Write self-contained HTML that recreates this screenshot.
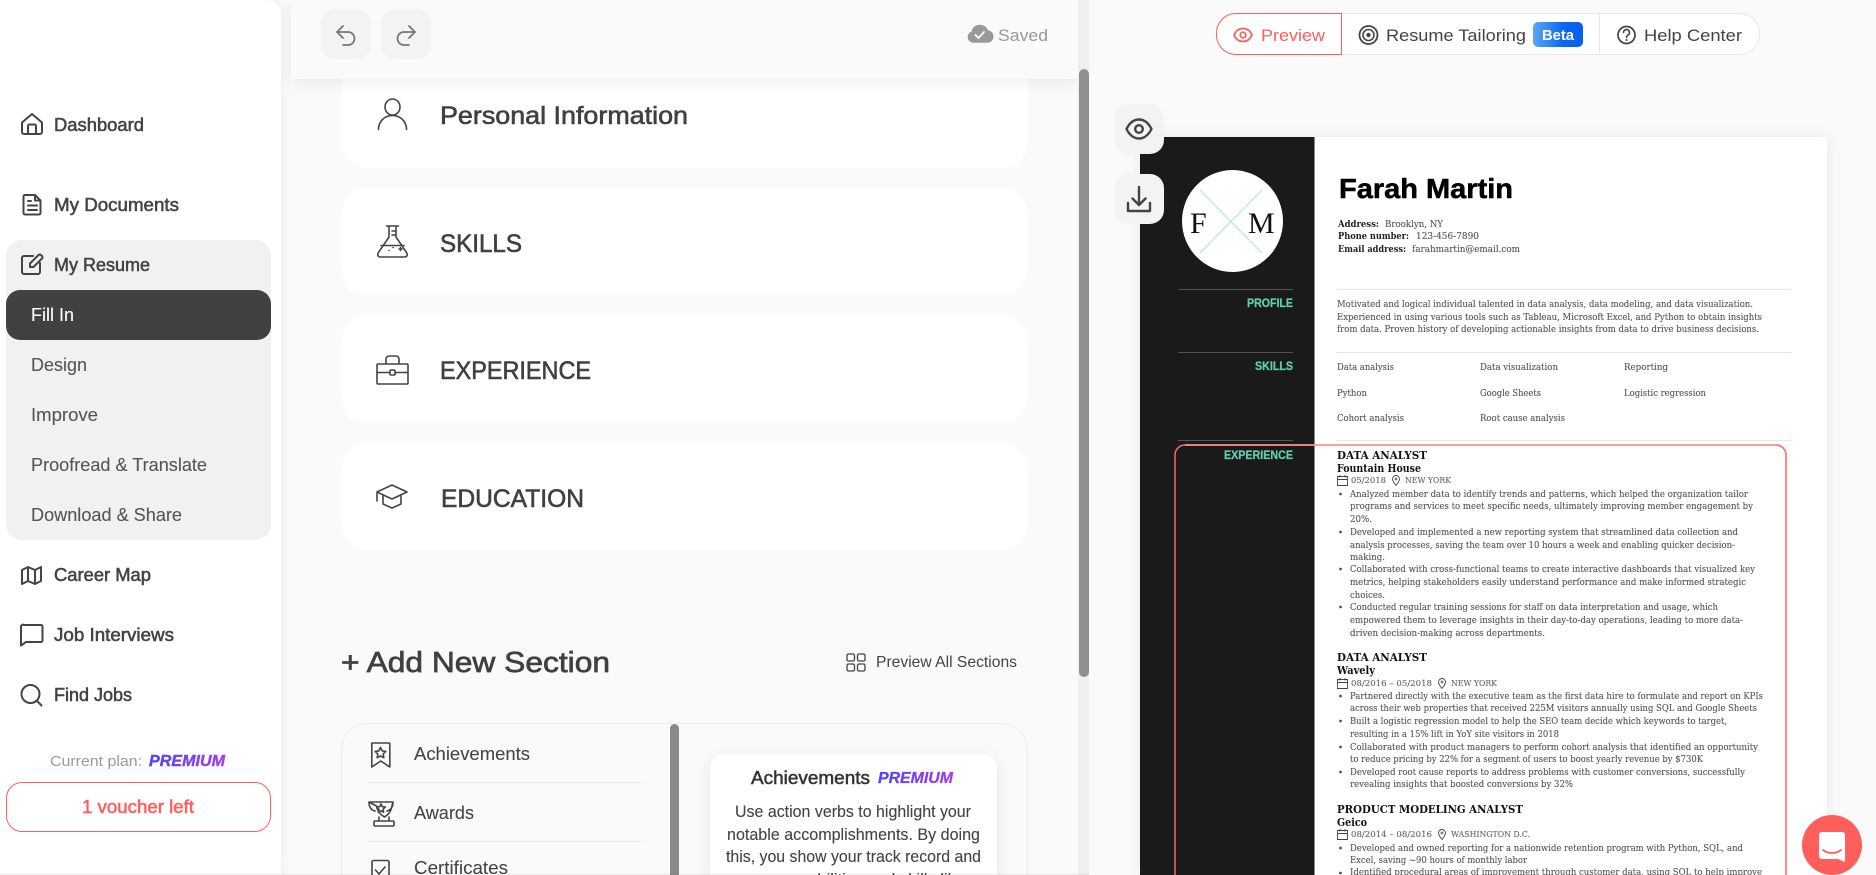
<!DOCTYPE html>
<html lang="en"><head><meta charset="utf-8"><title>Resume Builder</title>
<style>
html,body{margin:0;padding:0;width:1876px;height:875px;overflow:hidden;background:#fafafa;font-family:"Liberation Sans",sans-serif}
#w{position:relative;width:1876px;height:875px;overflow:hidden;background:#fafafa}
.b{position:absolute;box-sizing:border-box}
svg.o{position:absolute;left:0;top:0;overflow:hidden}
text{font-family:"Liberation Sans",sans-serif}
.n{font-size:18px;fill:#444;stroke:#444;stroke-width:.55}
.s{font-size:18px;fill:#555;stroke:#555;stroke-width:.1}
.h{font-size:25px;fill:#404040;stroke:#404040;stroke-width:.6}
.t{font-size:17px;fill:#444;stroke:#444;stroke-width:.12}
.r{font-family:"DejaVu Serif",serif;font-size:8.8px;fill:#555;stroke:#555;stroke-width:.12}
.j{font-family:"DejaVu Serif",serif;font-size:11.5px;font-weight:bold;fill:#111}
.k{font-family:"DejaVu Serif",serif;font-size:9px;font-weight:bold;fill:#222}
.d{font-family:"DejaVu Serif",serif;font-size:8.6px;fill:#666;stroke:#666;stroke-width:.12}
.l{font-size:11.5px;font-weight:bold;fill:#5ed0b2;stroke:#5ed0b2;stroke-width:.25}
.i{fill:none;stroke:#444;stroke-width:2;stroke-linecap:round;stroke-linejoin:round}
.c{fill:none;stroke:#444;stroke-width:1.6;stroke-linecap:round;stroke-linejoin:round}
</style></head><body>
<div id="w">
<!-- middle panel -->
<div class="b" style="left:341px;top:40px;width:687px;height:128px;background:#fff;border-radius:26px"></div>
<div class="b" style="left:341px;top:188px;width:687px;height:107px;background:#fff;border-radius:26px"></div>
<div class="b" style="left:341px;top:315px;width:687px;height:108px;background:#fff;border-radius:26px"></div>
<div class="b" style="left:341px;top:443px;width:687px;height:107px;background:#fff;border-radius:26px"></div>
<div class="b" style="left:291px;top:0;width:787px;height:79px;background:#fafafa;box-shadow:0 4px 14px rgba(0,0,0,.07)"></div>
<div class="b" style="left:321px;top:9px;width:50px;height:50px;background:#f3f3f3;border-radius:14px"></div>
<div class="b" style="left:381px;top:9px;width:50px;height:50px;background:#f3f3f3;border-radius:14px"></div>
<div class="b" style="left:1078px;top:0;width:11px;height:875px;background:#efefef"></div>
<div class="b" style="left:1079px;top:69px;width:10px;height:608px;background:#8f8f8f;border-radius:5px"></div>

<div class="b" style="left:341px;top:723px;width:687px;height:152px;border:1px solid #ececec;border-bottom:0;border-radius:26px 26px 0 0"></div>
<div class="b" style="left:670px;top:724px;width:9px;height:151px;background:#8a8a8a;border-radius:5px 5px 0 0"></div>
<div class="b" style="left:368px;top:782px;width:274px;height:1px;background:#e8e8e8"></div>
<div class="b" style="left:368px;top:841px;width:274px;height:1px;background:#e8e8e8"></div>
<div class="b" style="left:710px;top:754px;width:287px;height:121px;background:#fff;border-radius:14px 14px 0 0;box-shadow:0 4px 16px rgba(0,0,0,.09)"></div>

<!-- sidebar -->
<div class="b" style="left:0;top:0;width:281px;height:875px;background:#fff;border-radius:0 14px 0 0;box-shadow:0 0 12px rgba(0,0,0,.07)"></div>
<div class="b" style="left:6px;top:240px;width:265px;height:300px;background:#f1f1f1;border-radius:16px"></div>
<div class="b" style="left:6px;top:290px;width:265px;height:50px;background:#414141;border-radius:14px"></div>
<div class="b" style="left:6px;top:782px;width:265px;height:50px;background:#fff;border:1px solid #ff5f5b;border-radius:16px"></div>
<div class="b" style="left:0;top:873px;width:1089px;height:2px;background:rgba(0,0,0,.03)"></div>

<!-- tabs -->
<div class="b" style="left:1216px;top:13px;width:544px;height:42px;background:#fff;border:1px solid #e8e8e8;border-radius:20px"></div>
<div class="b" style="left:1599px;top:14px;width:1px;height:40px;background:#e8e8e8"></div>
<div class="b" style="left:1216px;top:13px;width:126px;height:42px;background:#fff;border:1px solid #ff5f5b;border-radius:20px 0 0 20px"></div>

<!-- resume -->
<div class="b" style="left:1140px;top:137px;width:687px;height:738px;background:#fff;box-shadow:0 0 16px rgba(0,0,0,.08)"></div>
<div class="b" style="left:1140px;top:137px;width:175px;height:738px;background:#1a1a1a;border-right:1px solid #888"></div>
<div class="b" style="left:1182px;top:170px;width:101px;height:102px;background:#fff;border-radius:50%"></div>
<div class="b" style="left:1178px;top:289px;width:115px;height:1px;background:#555"></div>
<div class="b" style="left:1178px;top:352px;width:115px;height:1px;background:#555"></div>
<div class="b" style="left:1178px;top:440px;width:115px;height:1px;background:#555"></div>
<div class="b" style="left:1337px;top:289px;width:454px;height:1px;background:#e8e8e8"></div>
<div class="b" style="left:1337px;top:352px;width:454px;height:1px;background:#e8e8e8"></div>
<div class="b" style="left:1337px;top:440px;width:454px;height:1px;background:#e8e8e8"></div>
<div class="b" style="left:1114px;top:104px;width:50px;height:50px;background:#f3f3f3;border-radius:14px"></div>
<div class="b" style="left:1114px;top:174px;width:50px;height:50px;background:#f3f3f3;border-radius:14px"></div>

<svg class="o" width="1876" height="875" viewBox="0 0 1876 875" xmlns="http://www.w3.org/2000/svg">
<defs>
<linearGradient id="p" x1="0" x2="1" y1="0" y2="0"><stop offset="0" stop-color="#4b46ff"/><stop offset="1" stop-color="#a63df0"/></linearGradient>
<linearGradient id="bt" x1="0" x2="1" y1="0" y2="0"><stop offset="0" stop-color="#5aa8f5"/><stop offset=".6" stop-color="#0c68f2"/><stop offset="1" stop-color="#0a5ef0"/></linearGradient>
</defs>

<!-- SIDEBAR TEXT -->
<text class="n" x="54" y="131" textLength="90" lengthAdjust="spacingAndGlyphs">Dashboard</text>
<text class="n" x="54" y="211" textLength="125" lengthAdjust="spacingAndGlyphs">My Documents</text>
<text class="n" x="54" y="271" textLength="96" lengthAdjust="spacingAndGlyphs">My Resume</text>
<text class="s" x="31" y="321" textLength="43" lengthAdjust="spacingAndGlyphs" style="fill:#fff;stroke:#fff">Fill In</text>
<text class="s" x="31" y="371" textLength="56" lengthAdjust="spacingAndGlyphs">Design</text>
<text class="s" x="31" y="421" textLength="67" lengthAdjust="spacingAndGlyphs">Improve</text>
<text class="s" x="31" y="471" textLength="176" lengthAdjust="spacingAndGlyphs">Proofread &amp; Translate</text>
<text class="s" x="31" y="521" textLength="151" lengthAdjust="spacingAndGlyphs">Download &amp; Share</text>
<text class="n" x="54" y="581" textLength="97" lengthAdjust="spacingAndGlyphs">Career Map</text>
<text class="n" x="54" y="641" textLength="120" lengthAdjust="spacingAndGlyphs">Job Interviews</text>
<text class="n" x="54" y="701" textLength="78" lengthAdjust="spacingAndGlyphs">Find Jobs</text>
<text x="50" y="766" font-size="15" fill="#999" textLength="92" lengthAdjust="spacingAndGlyphs">Current plan:</text>
<text x="149" y="766" font-size="15.5" font-weight="bold" font-style="italic" fill="url(#p)" stroke="url(#p)" stroke-width=".4" textLength="76" lengthAdjust="spacingAndGlyphs">PREMIUM</text>
<text x="82" y="813" font-size="18" fill="#ff5f5b" stroke="#ff5f5b" stroke-width=".55" textLength="112" lengthAdjust="spacingAndGlyphs">1 voucher left</text>

<!-- SIDEBAR ICONS -->
<path class="i" d="M22 122.500 32 114l10 8.500V132a2 2 0 0 1-2 2H24a2 2 0 0 1-2-2z"/><path class="i" d="M28 134v-8a1.500 1.500 0 0 1 1.500-1.500h5A1.500 1.500 0 0 1 36 126v8"/>
<path class="i" d="M25 195h10l5.500 5.500V213a1.500 1.500 0 0 1-1.500 1.500H25a1.500 1.500 0 0 1-1.500-1.500V196.500A1.500 1.500 0 0 1 25 195z"/><path class="i" d="M35 195v5.500h5.500M28 201h3M28 205.500h9M28 210h9" stroke-width="1.700"/>
<path class="i" d="M33 256h-9a2 2 0 0 0-2 2v14a2 2 0 0 0 2 2h14a2 2 0 0 0 2-2v-9"/><path class="i" d="M30 267v-3.500L38.500 255a1.800 1.800 0 0 1 2.500 0l1 1a1.800 1.800 0 0 1 0 2.500L33.500 267z"/>
<path class="i" d="M22 570l6-3 7 3 6-3v14l-6 3-7-3-6 3zM28 567v14M35 570v14"/>
<path class="i" d="M24 625h17a1.500 1.500 0 0 1 1.500 1.500v14a1.500 1.500 0 0 1-1.500 1.500H26l-5 3.500V627a2 2 0 0 1 3-2z"/>
<circle class="i" cx="30.500" cy="694" r="9"/><path class="i" d="M37 701l4.500 4.500"/>

<!-- TOOLBAR -->
<path d="M343 26l-6 6 6 6M337 32h11a6.500 6.500 0 0 1 0 13h-5" fill="none" stroke="#777" stroke-width="1.800" stroke-linecap="round" stroke-linejoin="round"/>
<path d="M409 26l6 6-6 6M415 32h-11a6.500 6.500 0 0 0 0 13h5" fill="none" stroke="#777" stroke-width="1.800" stroke-linecap="round" stroke-linejoin="round"/>
<path d="M973 42a5 5 0 0 1-1-9.800 8 8 0 0 1 15.500-1.200 5.500 5.500 0 0 1-.5 11z" fill="#999" stroke="#999" stroke-width="1.500"/>
<path d="M975.500 35l3 3 5.500-6" fill="none" stroke="#fff" stroke-width="1.800" stroke-linecap="round"/>
<text x="998" y="41" font-size="17" fill="#999" textLength="50" lengthAdjust="spacingAndGlyphs">Saved</text>

<!-- SECTIONS -->
<text class="h" x="440" y="124" textLength="248" lengthAdjust="spacingAndGlyphs">Personal Information</text>
<text class="h" x="440" y="252" textLength="82" lengthAdjust="spacingAndGlyphs">SKILLS</text>
<text class="h" x="440" y="379" textLength="151" lengthAdjust="spacingAndGlyphs">EXPERIENCE</text>
<text class="h" x="441" y="507" textLength="143" lengthAdjust="spacingAndGlyphs">EDUCATION</text>

<ellipse class="c" cx="392.500" cy="107" rx="7.500" ry="8"/><path class="c" d="M378.500 129.500c0-8 6-14 14-14s14 6 14 14"/>
<path class="c" d="M386.500 226h12M389 226v11l-10.500 15.500c-1.500 2.500-.5 4.500 2 4.500h24c2.500 0 3.500-2 2-4.500L396 237v-11M392 231h4M392 235h4M381 245.500h23"/><path class="c" d="M389 250.500h.1M393 247.500h.1M399 249h3M400.500 247.500v3"/>
<path class="c" d="M378 364h29a1 1 0 0 1 1 1v18a1 1 0 0 1-1 1h-29a1 1 0 0 1-1-1v-18a1 1 0 0 1 1-1zM386 364v-5a3 3 0 0 1 3-3h7a3 3 0 0 1 3 3v5M377 372.500h13M395 372.500h13"/><rect class="c" x="390" y="370" width="5" height="5" rx="1"/>
<path class="c" d="M392 485l15 7-15 7-15-7zM377 492v9M383 495v9l9 4 9-4v-9"/>

<text x="341" y="672" font-size="29" fill="#404040" stroke="#404040" stroke-width=".7" textLength="269" lengthAdjust="spacingAndGlyphs">+ Add New Section</text>
<g><rect class="c" style="stroke-width:1.3" x="847" y="654" width="7.500" height="7" rx="1.500"/><rect class="c" style="stroke-width:1.3" x="857.500" y="654" width="7.500" height="7" rx="1.500"/><rect class="c" style="stroke-width:1.3" x="847" y="664" width="7.500" height="7" rx="1.500"/><rect class="c" style="stroke-width:1.3" x="857.500" y="664" width="7.500" height="7" rx="1.500"/></g>
<text x="876" y="667" font-size="16" fill="#444" textLength="141" lengthAdjust="spacingAndGlyphs">Preview All Sections</text>

<text class="s" x="414" y="760" textLength="116" lengthAdjust="spacingAndGlyphs" style="fill:#444">Achievements</text>
<text class="s" x="414" y="819" textLength="60" lengthAdjust="spacingAndGlyphs" style="fill:#444">Awards</text>
<text class="s" x="414" y="874" textLength="94" lengthAdjust="spacingAndGlyphs" style="fill:#444">Certificates</text>
<path class="c" d="M372 743h17a.800.800 0 0 1 .800.800V767l-9-6-9 6V743.800a.800.800 0 0 1 .200-.800z"/><path class="c" d="M380.500 747.500l1.700 3.400 3.600.500-2.600 2.600.6 3.700-3.300-1.800-3.300 1.800.6-3.700-2.600-2.600 3.600-.500z"/>
<path class="c" d="M369 802h24l-1 4c-1 6-4 9-7.500 11-3.500-2-7-5-8-11zM369 802c0 5 2 8 6 9M393 802c0 5-2 8-6 9"/><path class="c" d="M379 817v4h10v-4M375 821h18a1 1 0 0 1 1 1v3a1 1 0 0 1-1 1h-18a1 1 0 0 1-1-1v-3a1 1 0 0 1 1-1zM381 804l1.300 2.700 3 .4-2.200 2.100.5 3-2.600-1.400-2.600 1.400.5-3-2.200-2.100 3-.4z"/>
<path class="c" d="M372 875v-13a1.500 1.500 0 0 1 1.500-1.500h14a1.500 1.500 0 0 1 1.500 1.500v13"/><path class="c" d="M375.500 870l3.500 4 6-7"/>

<text x="751" y="784" font-size="18" fill="#333" stroke="#333" stroke-width=".5" textLength="119" lengthAdjust="spacingAndGlyphs">Achievements</text>
<text x="878" y="783" font-size="16" font-weight="bold" font-style="italic" fill="url(#p)" stroke="url(#p)" stroke-width=".3" textLength="75" lengthAdjust="spacingAndGlyphs">PREMIUM</text>
<text class="t" x="735" y="817" textLength="236" lengthAdjust="spacingAndGlyphs">Use action verbs to highlight your</text>
<text class="t" x="727" y="840" textLength="253" lengthAdjust="spacingAndGlyphs">notable accomplishments. By doing</text>
<text class="t" x="726" y="862" textLength="255" lengthAdjust="spacingAndGlyphs">this, you show your track record and</text>
<text class="t" x="745" y="885" textLength="220" lengthAdjust="spacingAndGlyphs">your capabilities and skills like</text>

<!-- TABS -->
<text x="1261" y="41" font-size="17" fill="#ff5f5b" textLength="64" lengthAdjust="spacingAndGlyphs">Preview</text>
<text x="1386" y="41" font-size="17" fill="#444" textLength="140" lengthAdjust="spacingAndGlyphs">Resume Tailoring</text>
<text x="1644" y="41" font-size="17" fill="#444" textLength="98" lengthAdjust="spacingAndGlyphs">Help Center</text>
<rect x="1533" y="22" width="50" height="25" rx="5" fill="url(#bt)"/>
<text x="1542" y="40" font-size="15" font-weight="bold" fill="#fff" textLength="32" lengthAdjust="spacingAndGlyphs">Beta</text>
<path d="M1234 35c2-4.500 5-6.500 9-6.500s7 2 9 6.500c-2 4.500-5 6.500-9 6.500s-7-2-9-6.500z" fill="none" stroke="#ff5f5b" stroke-width="1.700"/><circle cx="1243" cy="35" r="2.800" fill="none" stroke="#ff5f5b" stroke-width="1.700"/>
<circle cx="1368.500" cy="35" r="9" fill="none" stroke="#444" stroke-width="1.800"/><circle cx="1368.500" cy="35" r="5.500" fill="none" stroke="#444" stroke-width="1.600"/><circle cx="1368.500" cy="35" r="2.200" fill="#444"/>
<circle cx="1626.500" cy="35" r="8.500" fill="none" stroke="#444" stroke-width="1.700"/><path d="M1623.500 32.500a3 3 0 1 1 4.500 2.600c-1 .6-1.500 1.200-1.500 2.200" fill="none" stroke="#444" stroke-width="1.600" stroke-linecap="round"/><circle cx="1626.500" cy="40" r="1" fill="#444"/>

<!-- FLOAT BUTTONS -->
<path d="M1126.500 129c3-6 7-9.500 12.500-9.500s9.500 3.500 12.500 9.500c-3 6-7 9.500-12.500 9.500s-9.500-3.500-12.500-9.500z" fill="none" stroke="#444" stroke-width="2.400" stroke-linejoin="round"/><circle cx="1139" cy="129" r="3.800" fill="none" stroke="#444" stroke-width="2.400"/>
<path d="M1139 187v18M1132.500 198.500l6.500 6.500 6.500-6.500M1128 203v8h22v-8" fill="none" stroke="#444" stroke-width="2.400" stroke-linecap="round" stroke-linejoin="round"/>

<!-- RESUME HEADER -->
<path d="M1200 190l62 63M1262 190l-62 63" stroke="#a4e8d6" stroke-width="1"/>
<text x="1190" y="233" font-size="30" fill="#111" style="font-family:'Liberation Serif',serif">F</text>
<text x="1248" y="233" font-size="30" fill="#111" style="font-family:'Liberation Serif',serif">M</text>
<text x="1339" y="198" font-size="28" font-weight="bold" fill="#000" stroke="#000" stroke-width=".5" textLength="174" lengthAdjust="spacingAndGlyphs">Farah Martin</text>
<text class="k" x="1338" y="227" textLength="41" lengthAdjust="spacingAndGlyphs">Address:</text><text class="r" x="1385" y="227" textLength="58" lengthAdjust="spacingAndGlyphs">Brooklyn, NY</text>
<text class="k" x="1338" y="239" textLength="71" lengthAdjust="spacingAndGlyphs">Phone number:</text><text class="r" x="1416" y="239" textLength="63" lengthAdjust="spacingAndGlyphs">123-456-7890</text>
<text class="k" x="1338" y="252" textLength="68" lengthAdjust="spacingAndGlyphs">Email address:</text><text class="r" x="1412" y="252" textLength="108" lengthAdjust="spacingAndGlyphs">farahmartin@email.com</text>

<text class="l" x="1247" y="307" textLength="46" lengthAdjust="spacingAndGlyphs">PROFILE</text>
<text class="l" x="1255" y="370" textLength="38" lengthAdjust="spacingAndGlyphs">SKILLS</text>
<text class="l" x="1224" y="459" textLength="69" lengthAdjust="spacingAndGlyphs">EXPERIENCE</text>

<text class="r" x="1337" y="307" textLength="416" lengthAdjust="spacingAndGlyphs">Motivated and logical individual talented in data analysis, data modeling, and data visualization.</text>
<text class="r" x="1337" y="320" textLength="425" lengthAdjust="spacingAndGlyphs">Experienced in using various tools such as Tableau, Microsoft Excel, and Python to obtain insights</text>
<text class="r" x="1337" y="332" textLength="422" lengthAdjust="spacingAndGlyphs">from data. Proven history of developing actionable insights from data to drive business decisions.</text>

<text class="r" x="1337" y="370" textLength="57" lengthAdjust="spacingAndGlyphs">Data analysis</text>
<text class="r" x="1480" y="370" textLength="78" lengthAdjust="spacingAndGlyphs">Data visualization</text>
<text class="r" x="1624" y="370" textLength="44" lengthAdjust="spacingAndGlyphs">Reporting</text>
<text class="r" x="1337" y="396" textLength="30" lengthAdjust="spacingAndGlyphs">Python</text>
<text class="r" x="1480" y="396" textLength="61" lengthAdjust="spacingAndGlyphs">Google Sheets</text>
<text class="r" x="1624" y="396" textLength="82" lengthAdjust="spacingAndGlyphs">Logistic regression</text>
<text class="r" x="1337" y="421" textLength="67" lengthAdjust="spacingAndGlyphs">Cohort analysis</text>
<text class="r" x="1480" y="421" textLength="85" lengthAdjust="spacingAndGlyphs">Root cause analysis</text>

<!-- JOB 1 -->
<text class="j" x="1337" y="459" textLength="90" lengthAdjust="spacingAndGlyphs">DATA ANALYST</text>
<text class="j" x="1337" y="472" textLength="84" lengthAdjust="spacingAndGlyphs">Fountain House</text>
<path d="M1337.500 476.500h10v9h-10zM1337.500 479.500h10M1340 475v2.500M1345 475v2.500" fill="none" stroke="#444" stroke-width=".9"/>
<text class="d" x="1351" y="483" textLength="35" lengthAdjust="spacingAndGlyphs">05/2018</text>
<path d="M1396 485.500c-2-2.500-3.500-4.500-3.500-6.500a3.500 3.500 0 0 1 7 0c0 2-1.500 4-3.500 6.500z" fill="none" stroke="#444" stroke-width=".9"/><circle cx="1396" cy="479" r="1" fill="none" stroke="#444" stroke-width=".7"/>
<text class="d" x="1405" y="483" textLength="46" lengthAdjust="spacingAndGlyphs">NEW YORK</text>
<g fill="#555"><circle cx="1340.500" cy="494" r="1.400"/><circle cx="1340.500" cy="532" r="1.400"/><circle cx="1340.500" cy="569" r="1.400"/><circle cx="1340.500" cy="607" r="1.400"/><circle cx="1340.500" cy="696" r="1.400"/><circle cx="1340.500" cy="721" r="1.400"/><circle cx="1340.500" cy="747" r="1.400"/><circle cx="1340.500" cy="772" r="1.400"/><circle cx="1340.500" cy="848" r="1.400"/><circle cx="1340.500" cy="873" r="1.400"/></g>
<text class="r" x="1350" y="497" textLength="398" lengthAdjust="spacingAndGlyphs">Analyzed member data to identify trends and patterns, which helped the organization tailor</text>
<text class="r" x="1350" y="509" textLength="403" lengthAdjust="spacingAndGlyphs">programs and services to meet specific needs, ultimately improving member engagement by</text>
<text class="r" x="1350" y="522" textLength="22" lengthAdjust="spacingAndGlyphs">20%.</text>
<text class="r" x="1350" y="535" textLength="388" lengthAdjust="spacingAndGlyphs">Developed and implemented a new reporting system that streamlined data collection and</text>
<text class="r" x="1350" y="548" textLength="385" lengthAdjust="spacingAndGlyphs">analysis processes, saving the team over 10 hours a week and enabling quicker decision-</text>
<text class="r" x="1350" y="560" textLength="35" lengthAdjust="spacingAndGlyphs">making.</text>
<text class="r" x="1350" y="572" textLength="405" lengthAdjust="spacingAndGlyphs">Collaborated with cross-functional teams to create interactive dashboards that visualized key</text>
<text class="r" x="1350" y="585" textLength="396" lengthAdjust="spacingAndGlyphs">metrics, helping stakeholders easily understand performance and make informed strategic</text>
<text class="r" x="1350" y="598" textLength="35" lengthAdjust="spacingAndGlyphs">choices.</text>
<text class="r" x="1350" y="610" textLength="368" lengthAdjust="spacingAndGlyphs">Conducted regular training sessions for staff on data interpretation and usage, which</text>
<text class="r" x="1350" y="623" textLength="393" lengthAdjust="spacingAndGlyphs">empowered them to leverage insights in their day-to-day operations, leading to more data-</text>
<text class="r" x="1350" y="636" textLength="195" lengthAdjust="spacingAndGlyphs">driven decision-making across departments.</text>

<!-- JOB 2 -->
<text class="j" x="1337" y="661" textLength="90" lengthAdjust="spacingAndGlyphs">DATA ANALYST</text>
<text class="j" x="1337" y="674" textLength="38" lengthAdjust="spacingAndGlyphs">Wavely</text>
<path d="M1337.500 679.500h10v9h-10zM1337.500 682.500h10M1340 678v2.500M1345 678v2.500" fill="none" stroke="#444" stroke-width=".9"/>
<text class="d" x="1351" y="686" textLength="81" lengthAdjust="spacingAndGlyphs">08/2016 – 05/2018</text>
<path d="M1442 688.500c-2-2.500-3.500-4.500-3.500-6.500a3.500 3.500 0 0 1 7 0c0 2-1.500 4-3.500 6.500z" fill="none" stroke="#444" stroke-width=".9"/><circle cx="1442" cy="682" r="1" fill="none" stroke="#444" stroke-width=".7"/>
<text class="d" x="1451" y="686" textLength="46" lengthAdjust="spacingAndGlyphs">NEW YORK</text>
<text class="r" x="1350" y="699" textLength="413" lengthAdjust="spacingAndGlyphs">Partnered directly with the executive team as the first data hire to formulate and report on KPIs</text>
<text class="r" x="1350" y="711" textLength="407" lengthAdjust="spacingAndGlyphs">across their web properties that received 225M visitors annually using SQL and Google Sheets</text>
<text class="r" x="1350" y="724" textLength="377" lengthAdjust="spacingAndGlyphs">Built a logistic regression model to help the SEO team decide which keywords to target,</text>
<text class="r" x="1350" y="737" textLength="209" lengthAdjust="spacingAndGlyphs">resulting in a 15% lift in YoY site visitors in 2018</text>
<text class="r" x="1350" y="750" textLength="408" lengthAdjust="spacingAndGlyphs">Collaborated with product managers to perform cohort analysis that identified an opportunity</text>
<text class="r" x="1350" y="762" textLength="353" lengthAdjust="spacingAndGlyphs">to reduce pricing by 22% for a segment of users to boost yearly revenue by $730K</text>
<text class="r" x="1350" y="775" textLength="395" lengthAdjust="spacingAndGlyphs">Developed root cause reports to address problems with customer conversions, successfully</text>
<text class="r" x="1350" y="787" textLength="223" lengthAdjust="spacingAndGlyphs">revealing insights that boosted conversions by 32%</text>

<!-- JOB 3 -->
<text class="j" x="1337" y="813" textLength="186" lengthAdjust="spacingAndGlyphs">PRODUCT MODELING ANALYST</text>
<text class="j" x="1337" y="826" textLength="30" lengthAdjust="spacingAndGlyphs">Geico</text>
<path d="M1337.500 830.500h10v9h-10zM1337.500 833.500h10M1340 829v2.500M1345 829v2.500" fill="none" stroke="#444" stroke-width=".9"/>
<text class="d" x="1351" y="837" textLength="81" lengthAdjust="spacingAndGlyphs">08/2014 – 08/2016</text>
<path d="M1442 839.500c-2-2.500-3.500-4.500-3.500-6.500a3.500 3.500 0 0 1 7 0c0 2-1.500 4-3.500 6.500z" fill="none" stroke="#444" stroke-width=".9"/><circle cx="1442" cy="833" r="1" fill="none" stroke="#444" stroke-width=".7"/>
<text class="d" x="1451" y="837" textLength="79" lengthAdjust="spacingAndGlyphs">WASHINGTON D.C.</text>
<text class="r" x="1350" y="851" textLength="393" lengthAdjust="spacingAndGlyphs">Developed and owned reporting for a nationwide retention program with Python, SQL, and</text>
<text class="r" x="1350" y="863" textLength="177" lengthAdjust="spacingAndGlyphs">Excel, saving ~90 hours of monthly labor</text>
<text class="r" x="1350" y="875" textLength="412" lengthAdjust="spacingAndGlyphs">Identified procedural areas of improvement through customer data, using SQL to help improve</text>

<!-- highlight box -->
<path d="M1175 875V455a10 10 0 0 1 10-10h591a10 10 0 0 1 10 10V875" fill="none" stroke="#ff6662" stroke-width="1.500"/>
<path d="M1185 445h591" fill="none" stroke="#ff9a97" stroke-width="1.500"/>

<!-- chat -->
<circle cx="1832" cy="845" r="30" fill="#ff5f5b"/>
<path d="M1822 832h20a3 3 0 0 1 3 3v27l-7-3h-16a3 3 0 0 1-3-3v-21a3 3 0 0 1 3-3z" fill="#fff"/>
<path d="M1823 850c5 4 13 4 18 0" fill="none" stroke="#ff5f5b" stroke-width="1.800" stroke-linecap="round"/>
</svg>
</div>
</body></html>
